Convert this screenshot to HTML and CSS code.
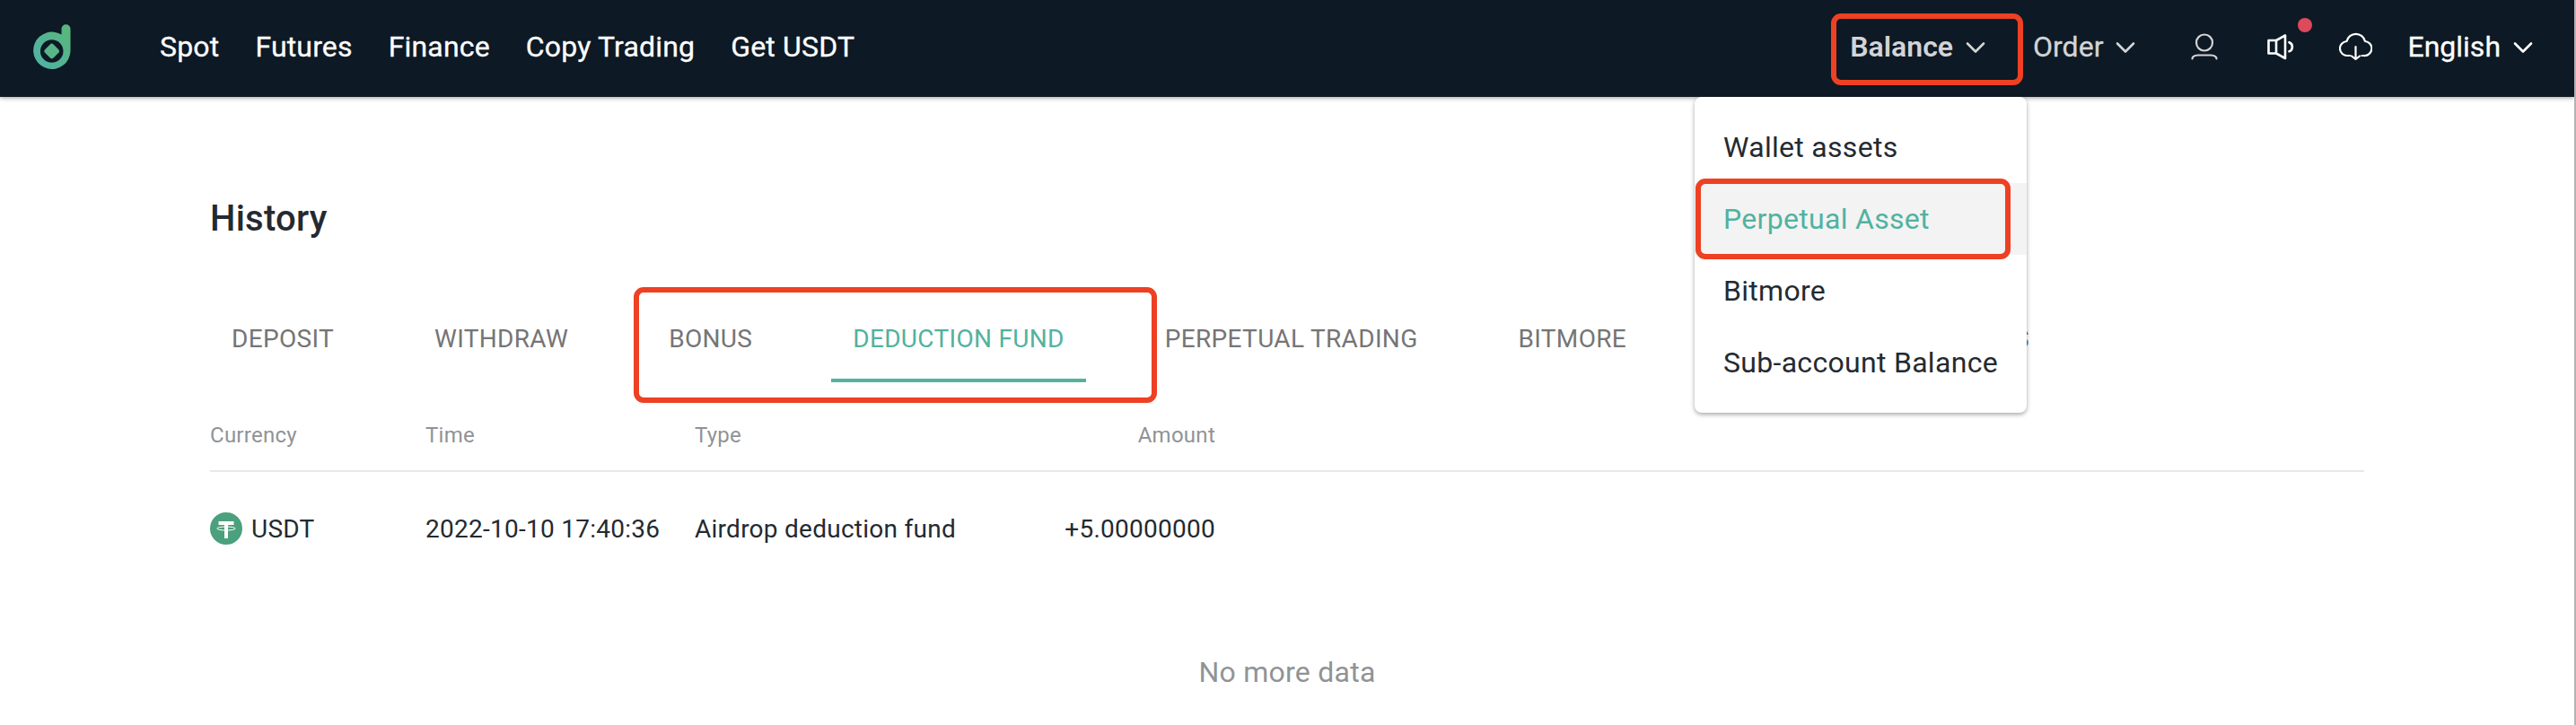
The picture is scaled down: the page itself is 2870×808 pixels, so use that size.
FILE: index.html
```html
<!DOCTYPE html>
<html lang="en">

<head>
  <meta charset="UTF-8">
  <meta name="viewport" content="width=device-width, initial-scale=1.0">
  <title>History</title>
  <link rel="stylesheet" href="styles.css">
</head>

<body>
  <header class="header">
    <svg class="logo" viewBox="0 0 42 51">
      <defs>
        <linearGradient id="logoFill" x1="0" y1="1" x2="1" y2="0">
          <stop offset="0.1" stop-color="#50b2a4" />
          <stop offset="0.9" stop-color="#58b77c" />
        </linearGradient>
      </defs>
      <path fill="url(#logoFill)" fill-rule="evenodd" d="M31.500 11.500V5.200a5 5 0 0 1 10 0V30A20.700 20.700 0 1 1 31.500 11.500ZM20.700 17.200a12.800 12.800 0 1 0 0 25.600a12.800 12.800 0 0 0 0-25.600Z" />
      <rect x="14" y="23.300" width="13.400" height="13.400" rx="3" transform="rotate(45 20.700 30)" fill="#57b588" />
    </svg>

    <nav class="nav">
      <a>Spot</a>
      <a>Futures</a>
      <a>Finance</a>
      <a>Copy Trading</a>
      <a>Get USDT</a>
    </nav>

    <div class="tools">
      <div class="drop balance">
        <span>Balance</span>
        <svg class="arrow" viewBox="0 0 24 14"><path d="M3 2.500l9 9 9-9" /></svg>
        <div class="mark mark-balance"></div>
      </div>
      <div class="drop order">
        <span>Order</span>
        <svg class="arrow" viewBox="0 0 24 14"><path d="M3 2.500l9 9 9-9" /></svg>
      </div>
      <svg class="icon user" viewBox="0 0 30 30">
        <circle cx="15" cy="10.500" r="9" />
        <path d="M1.500 28.500c0-2.500 3-3.800 6.500-4h14c3.500.2 6.500 1.500 6.500 4" />
      </svg>
      <div class="notice">
        <svg class="icon" viewBox="0 0 30 30">
          <path d="M1.500 8v14.500h8.500L20 28V2.500L10 8ZM10 8v14.500M24.500 10.200c1.900.7 3.400 2.500 3.400 5s-1.500 4.300-3.400 5" />
        </svg>
        <span class="dot"></span>
      </div>
      <svg class="icon cloud" viewBox="0 0 37 32">
        <path d="M12 26h-2.500A8 8 0 0 1 8.500 10a10.500 10.500 0 0 1 20.500 0a8 8 0 0 1-1.300 16H25.500M18.500 16v14M14 26.500l4.500 3.500 4.500-3.500" />
      </svg>
      <div class="drop lang">
        <span>English</span>
        <svg class="arrow" viewBox="0 0 24 14"><path d="M3 2.500l9 9 9-9" /></svg>
      </div>
    </div>

    <!-- Balance dropdown -->
    <div class="menu">
      <a class="menu-item">Wallet assets</a>
      <a class="menu-item active">Perpetual Asset</a>
      <a class="menu-item">Bitmore</a>
      <a class="menu-item">Sub-account Balance</a>
      <div class="mark mark-perpetual"></div>
    </div>
  </header>

  <main class="container">
    <h1>History</h1>

    <div class="tabs">
      <a class="tab">DEPOSIT</a>
      <a class="tab">WITHDRAW</a>
      <a class="tab">BONUS</a>
      <a class="tab active">DEDUCTION FUND</a>
      <a class="tab">PERPETUAL TRADING</a>
      <a class="tab">BITMORE</a>
      <a class="tab last">SUB-ACCOUNT TRANSFERS</a>
      <div class="mark mark-tabs"></div>
    </div>

    <div class="row head">
      <span>Currency</span>
      <span>Time</span>
      <span>Type</span>
      <span class="amount">Amount</span>
    </div>
    <div class="row">
      <span class="coin">
        <svg class="usdt" viewBox="0 0 36 36">
          <circle cx="18" cy="18" r="18" fill="#4ba07d" />
          <path fill="#fff" d="M9.500 10h17v4h-6.500v15h-4V14H9.500Z" />
          <ellipse cx="18" cy="18" rx="10.300" ry="2" fill="none" stroke="#fff" />
        </svg>
        USDT
      </span>
      <span>2022-10-10 17:40:36</span>
      <span>Airdrop deduction fund</span>
      <span class="amount">+5.00000000</span>
    </div>

    <p class="no-more">No more data</p>
  </main>
</body>

</html>
```

FILE: styles.css
```css
* {
  box-sizing: border-box;
}

body {
  margin: 0;
  height: 808px;
  overflow: hidden;
  font-family: Roboto, Arial, sans-serif;
  color: #242a31;
  background: #fff;
  border-right: 2px solid #b3b3b3;
}

/* Header */
.header {
  position: relative;
  z-index: 10;
  display: flex;
  align-items: center;
  height: 108px;
  padding: 0 45px 4px 37px;
  background: #0d1924;
  color: #fff;
  font-size: 32px;
  line-height: 40px;
  box-shadow: 0 1px 5px rgba(0, 0, 0, 0.4);
}

.logo {
  width: 42px;
  height: 51px;
}

.nav {
  display: flex;
  gap: 40px;
  margin-left: 99px;
  letter-spacing: 0.17px;
  -webkit-text-stroke: 0.3px;
}

.tools {
  display: flex;
  align-items: center;
  margin-left: auto;
}

.drop {
  position: relative;
  display: flex;
  align-items: center;
}

.arrow {
  width: 24px;
  height: 14px;
  margin: 2px 0 0 13px;
  fill: none;
  stroke: currentColor;
  stroke-width: 2.6;
  stroke-linecap: round;
  stroke-linejoin: round;
}

.balance,
.order,
.user {
  color: #d3d4d6;
}

.balance {
  font-weight: 600;
}

.order,
.lang {
  -webkit-text-stroke: 0.3px;
}

.order {
  margin-left: 52px;
}

.icon {
  display: block;
  width: 30px;
  height: 30px;
  fill: none;
  stroke: currentColor;
  stroke-width: 2.6;
  stroke-linecap: round;
  stroke-linejoin: round;
}

.user {
  margin-left: 61px;
  stroke-width: 2.2;
}

.notice {
  position: relative;
  margin-left: 55px;
}

.dot {
  position: absolute;
  top: -17px;
  left: 34px;
  width: 16px;
  height: 16px;
  border-radius: 50%;
  background: #dc4a5b;
}

.icon.cloud {
  width: 37px;
  height: 32px;
  margin-left: 50px;
  stroke-width: 2.2;
}

.lang {
  margin-left: 39px;
}

/* Dropdown */
.menu {
  position: absolute;
  top: 108px;
  left: 1888px;
  width: 370px;
  padding: 16px 0;
  border-radius: 8px;
  background: #fff;
  color: #242a31;
  letter-spacing: 0.3px;
  box-shadow: 0 2px 5px rgba(0, 0, 0, 0.35);
  clip-path: inset(0 -10px -10px -10px);
}

.menu-item {
  display: block;
  height: 80px;
  padding: 0 32px;
  line-height: 80px;
  white-space: nowrap;
}

.menu-item.active {
  background: #f3f3f3;
  color: #51b2a0;
}

/* Red highlight frames */
.mark {
  position: absolute;
  border: 6px solid #ee4023;
  border-radius: 11px;
}

.mark-balance {
  top: -17px;
  left: -21px;
  width: 214px;
  height: 80px;
}

.mark-perpetual {
  top: 91px;
  left: 1px;
  width: 351px;
  height: 90px;
}

.mark-tabs {
  top: -10px;
  left: 472px;
  width: 583px;
  height: 129px;
}

/* Content */
.container {
  width: 2400px;
  margin: 0 auto;
  padding-top: 111px;
  font-size: 28px;
  letter-spacing: 0.26px;
}

h1 {
  margin: 0 0 61px;
  font-size: 40px;
  font-weight: 500;
  line-height: 50px;
}

.tabs {
  position: relative;
  display: flex;
  gap: 64px;
  letter-spacing: 0.32px;
}

.tab {
  height: 96px;
  padding: 0 24px;
  line-height: 96px;
  color: #757575;
  white-space: nowrap;
}

.tab.active {
  color: #51b2a0;
  border-bottom: 4px solid #51b2a0;
}

.tab.last {
  padding-left: 6px;
}

.row {
  display: grid;
  grid-template-columns: 240px 300px 320px 260px;
  align-items: center;
  height: 126px;
}

.row.head {
  height: 100px;
  padding-top: 20px;
  font-size: 24px;
  color: #909396;
  border-bottom: 2px solid #e9e9e9;
}

.amount {
  text-align: right;
}

.coin {
  display: flex;
  align-items: center;
  gap: 10px;
}

.usdt {
  width: 36px;
  height: 36px;
}

.no-more {
  margin: 77px 0 0;
  font-size: 32px;
  line-height: 40px;
  text-align: center;
  color: #909396;
}
```
